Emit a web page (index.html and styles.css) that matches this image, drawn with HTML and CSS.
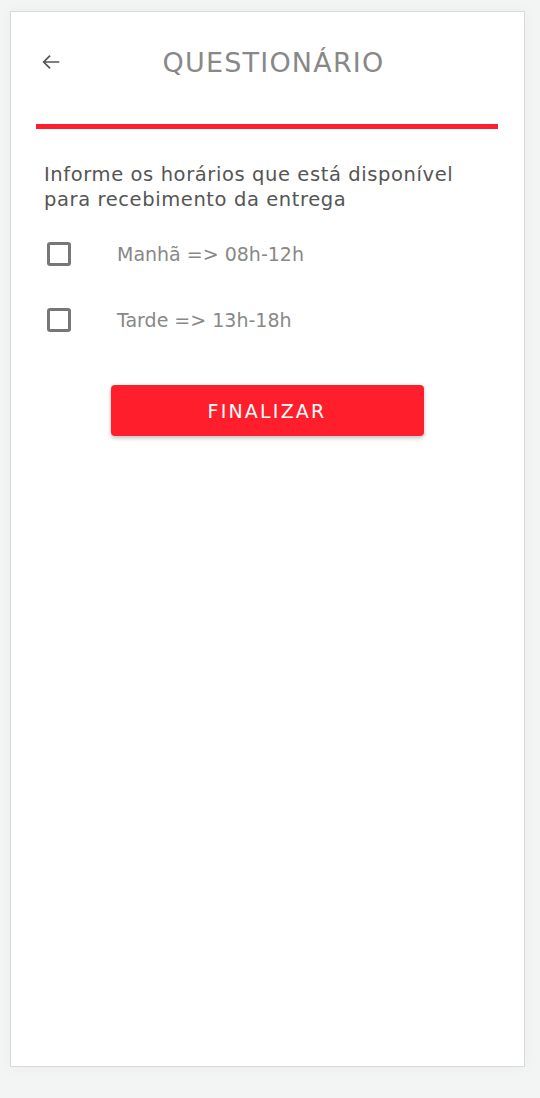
FILE: index.html
```html
<!DOCTYPE html>
<html lang="pt">
<head>
<meta charset="utf-8">
<title>Questionário</title>
<link rel="stylesheet" href="styles.css">
</head>
<body>
<div class="card">
  <header class="header">
    <button class="back" aria-label="Voltar">
      <svg width="22" height="22" viewBox="0 0 24 24"><path d="M21 12H4M11 5l-7 7 7 7" fill="none" stroke="#555" stroke-width="1.9"/></svg>
    </button>
    <h1 class="title">QUESTIONÁRIO</h1>
  </header>
  <div class="divider"></div>
  <p class="question">Informe os horários que está disponível para recebimento da entrega</p>
  <div class="options">
    <label class="option"><span class="box"></span><span class="opt-text">Manhã =&gt; 08h-12h</span></label>
    <label class="option"><span class="box"></span><span class="opt-text">Tarde =&gt; 13h-18h</span></label>
  </div>
  <div class="actions"><button class="finish">FINALIZAR</button></div>
</div>
</body>
</html>
```
FILE: styles.css
```css
html, body { margin: 0; padding: 0; }
body {
  background: #f3f4f4;
  font-family: "DejaVu Sans", "Open Sans", sans-serif;
  padding: 11px 15px 30px 10px;
}
.card {
  background: #fff;
  border: 1px solid #d9d9d9;
  height: 1054px;
  box-shadow: 0 0 14px rgba(0,0,0,0.04);
  padding: 0 25px 0 25px;
}
.header {
  display: flex;
  align-items: center;
  height: 100px;
}
.back {
  background: none; border: 0; padding: 0; margin-left: 3px;
  width: 24px; height: 24px; display: flex; align-items: center; justify-content: center;
}
.title {
  flex: 1;
  text-align: center;
  margin: 0 0 0 -15px;
  font-weight: 400;
  font-size: 27px;
  color: #888;
  letter-spacing: 1.2px;
}
.divider {
  height: 5px;
  background: #ff1e2d;
  margin: 12px 1px 0 0;
}
.question {
  margin: 33px 0 0 8px;
  max-width: 420px;
  font-size: 19.5px;
  letter-spacing: 0.6px;
  line-height: 25px;
  color: #555;
}
.options { margin-top: 9px; }
.option {
  display: flex;
  align-items: center;
  height: 66px;
  margin-left: 11px;
}
.box {
  width: 18px; height: 18px;
  border: 3px solid #777;
  border-radius: 3px;
}
.opt-text {
  margin-left: 46px;
  font-size: 19px;
  color: #888;
}
.actions {
  display: flex; justify-content: center;
  margin-top: 32px;
  padding-right: 1px;
}
.finish {
  width: 313px; height: 51px;
  background: #ff1e2b;
  border: 0; border-radius: 4px;
  color: #fff;
  font-family: inherit;
  font-size: 19px;
  letter-spacing: 2.2px;
  box-shadow: 0 2px 4px rgba(0,0,0,0.25);
}
```
